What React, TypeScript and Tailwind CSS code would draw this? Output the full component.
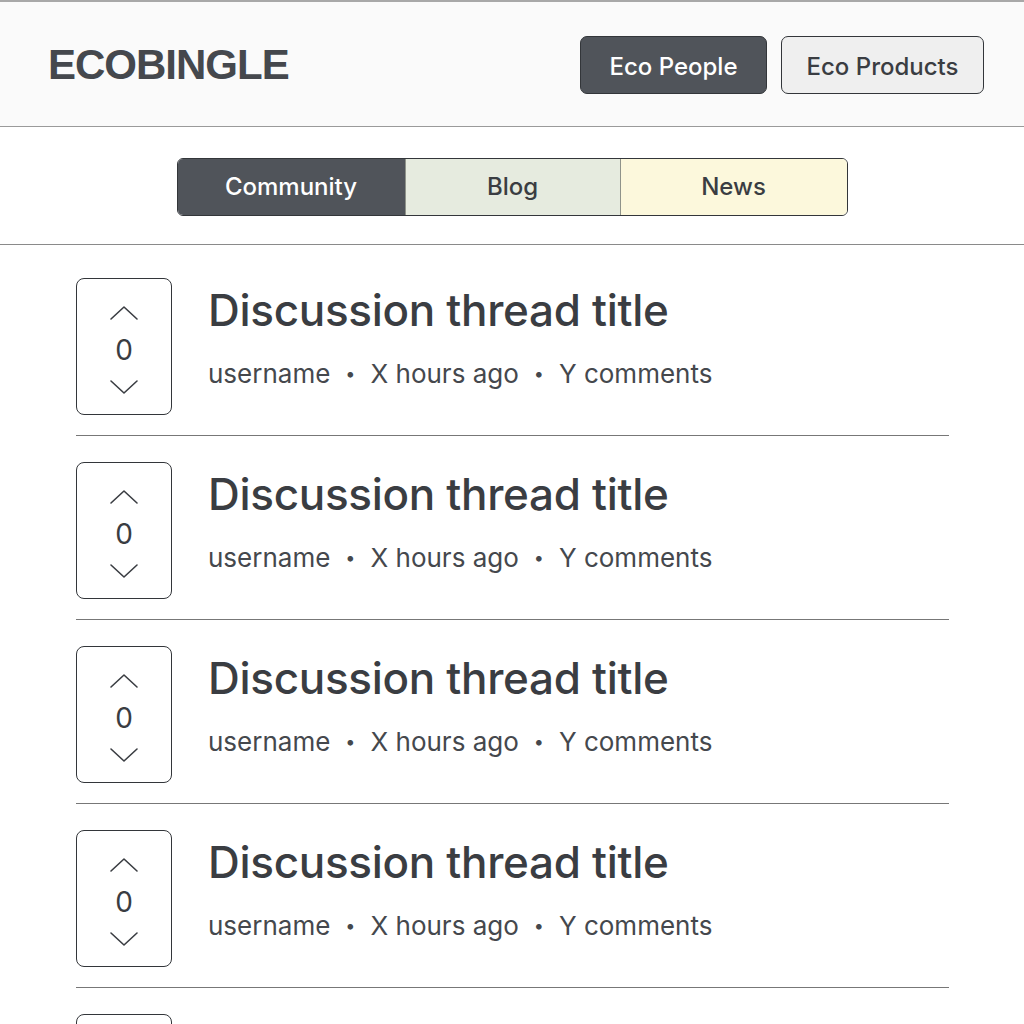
import React from 'react';

const threads = [1, 2, 3, 4, 5];

function ChevronUp() {
  return <svg width="30" height="16" viewBox="0 0 30 16" fill="none" stroke="#3a3d42" strokeWidth="1.6" strokeLinecap="round" strokeLinejoin="round">
    <path d="M2 14 L15 2 L28 14" />
  </svg>;
}

function ChevronDown() {
  return <svg width="30" height="16" viewBox="0 0 30 16" fill="none" stroke="#3a3d42" strokeWidth="1.6" strokeLinecap="round" strokeLinejoin="round">
    <path d="M2 2 L15 14 L28 2" />
  </svg>;
}

export default function App() {
  return <div className="h-[1024px] w-full overflow-hidden bg-white text-[#3a3d42]" style={{ fontFamily: 'Inter, "Liberation Sans", sans-serif' }}>
    {/* Header */}
    <header className="flex h-[127px] items-center justify-between border-t-2 border-b border-t-[#a8a8a8] border-b-[#9a9a9a] bg-[#fafafa] pl-12 pr-10">
      <h1 className="text-[42px] font-bold tracking-[-1px] text-[#45484d]" style={{ fontFamily: '"Liberation Sans", Arial, sans-serif' }}>ECOBINGLE</h1>
      <div className="flex gap-[14px] pt-[2px]">
        <button className="h-[58px] w-[187px] rounded-[7px] border border-[#33363a] bg-[#50545a] pt-[3px] text-[24px] font-medium text-white">Eco People</button>
        <button className="h-[58px] w-[203px] rounded-[7px] border border-[#33363a] bg-[#efefef] pt-[3px] text-[24px] font-medium text-[#3a3d42]">Eco Products</button>
      </div>
    </header>

    {/* Tabs */}
    <div className="flex justify-center border-b border-[#8a8a8a] pt-[31px] pb-[28px]">
      <div className="flex h-[58px] w-[671px] overflow-hidden rounded-[6px] border border-[#33363a]">
        <div className="flex w-[227px] items-center justify-center bg-[#50545a] text-[24px] font-medium text-white">Community</div>
        <div className="flex w-[216px] items-center justify-center border-l border-r border-[#8f938a] bg-[#e6ebdf] text-[24px] font-medium text-[#3a3d42]">Blog</div>
        <div className="flex flex-1 items-center justify-center bg-[#fcf8dc] text-[24px] font-medium text-[#3a3d42]">News</div>
      </div>
    </div>

    {/* Thread list */}
    <div className="ml-[76px] w-[873px] pt-[7px]">
      {threads.map(t => <div key={t} className="flex border-b border-[#777] pt-[26px] pb-[20px]">
        <div className="flex h-[137px] w-[96px] shrink-0 flex-col items-center justify-center rounded-[8px] border border-[#33363a] bg-white pt-[6px]">
          <ChevronUp />
          <span className="my-[15px] text-[28px] leading-none font-normal text-[#3a3d42]">0</span>
          <ChevronDown />
        </div>
        <div className="ml-[36px] pt-[4px]">
          <h2 className="text-[44px] leading-[56px] font-medium tracking-[-0.3px] text-[#3a3d42]">Discussion thread title</h2>
          <div className="mt-[16px] flex items-center text-[26px] text-[#45484d]">
            <span>username</span>
            <span className="mx-[15px] text-[18px]">•</span>
            <span>X hours ago</span>
            <span className="mx-[15px] text-[18px]">•</span>
            <span>Y comments</span>
          </div>
        </div>
      </div>)}
    </div>
  </div>;
}
